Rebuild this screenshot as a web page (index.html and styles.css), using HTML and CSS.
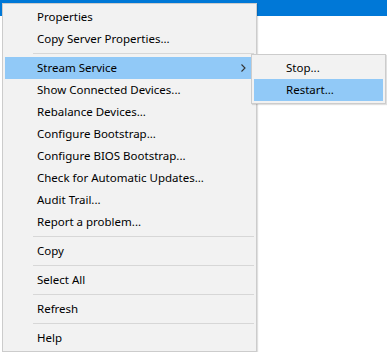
FILE: index.html
```html
<!DOCTYPE html>
<html lang="en">
<head>
    <meta charset="UTF-8">
    <meta name="viewport" content="width=device-width, initial-scale=1.0">
    <title>Context menu</title>
    <link rel="stylesheet" href="styles.css">
</head>
<body>
    <div class="title-bar"></div>

    <ul class="menu context-menu">
        <li class="item">Properties</li>
        <li class="item">Copy Server Properties...</li>
        <li class="separator"></li>
        <li class="item has-sub active">
            <span>Stream Service</span>
            <svg class="arrow" width="5" height="8" viewBox="0 0 5 8">
                <path d="M0.5 0.5 L4 4 L0.5 7.5" fill="none" stroke="#333" stroke-width="1.1"/>
            </svg>
            <ul class="menu submenu">
                <li class="item">Stop...</li>
                <li class="item active">Restart...</li>
            </ul>
        </li>
        <li class="item">Show Connected Devices...</li>
        <li class="item">Rebalance Devices...</li>
        <li class="item">Configure Bootstrap...</li>
        <li class="item">Configure BIOS Bootstrap...</li>
        <li class="item">Check for Automatic Updates...</li>
        <li class="item">Audit Trail...</li>
        <li class="item">Report a problem...</li>
        <li class="separator"></li>
        <li class="item">Copy</li>
        <li class="separator"></li>
        <li class="item">Select All</li>
        <li class="separator"></li>
        <li class="item">Refresh</li>
        <li class="separator"></li>
        <li class="item">Help</li>
    </ul>
</body>
</html>
```

FILE: styles.css
```css
body {
    margin: 0;
    background-color: white;
    font-family: "Noto Sans", "Open Sans", sans-serif;
    font-size: 11.5px;
    color: black;
}
.title-bar {
    height: 16px;
    background-color: #0078d7;
}
.menu {
    list-style: none;
    margin: 0;
    padding: 2px;
    background-color: #f2f2f2;
    border: 1px solid #cccccc;
    box-shadow: 1px 1px 1px rgba(0, 0, 0, 0.12);
    box-sizing: border-box;
}
.context-menu {
    position: absolute;
    top: 3px;
    left: 2px;
    width: 255px;
}
.item {
    height: 22px;
    line-height: 22px;
    padding-left: 32px;
    white-space: nowrap;
}
.item.active {
    background-color: #91c9f7;
}
.has-sub {
    position: relative;
    display: flex;
    align-items: center;
    padding-right: 8px;
}
.has-sub span {
    flex: 1;
}
.arrow {
    display: block;
}
.separator {
    height: 7px;
    margin-left: 28px;
    display: flex;
    align-items: center;
}
.separator:before {
    content: "";
    display: block;
    width: 100%;
    height: 1px;
    background-color: #d7d7d7;
}
.submenu {
    position: absolute;
    top: -3px;
    left: 246px;
    width: 135px;
}
```
